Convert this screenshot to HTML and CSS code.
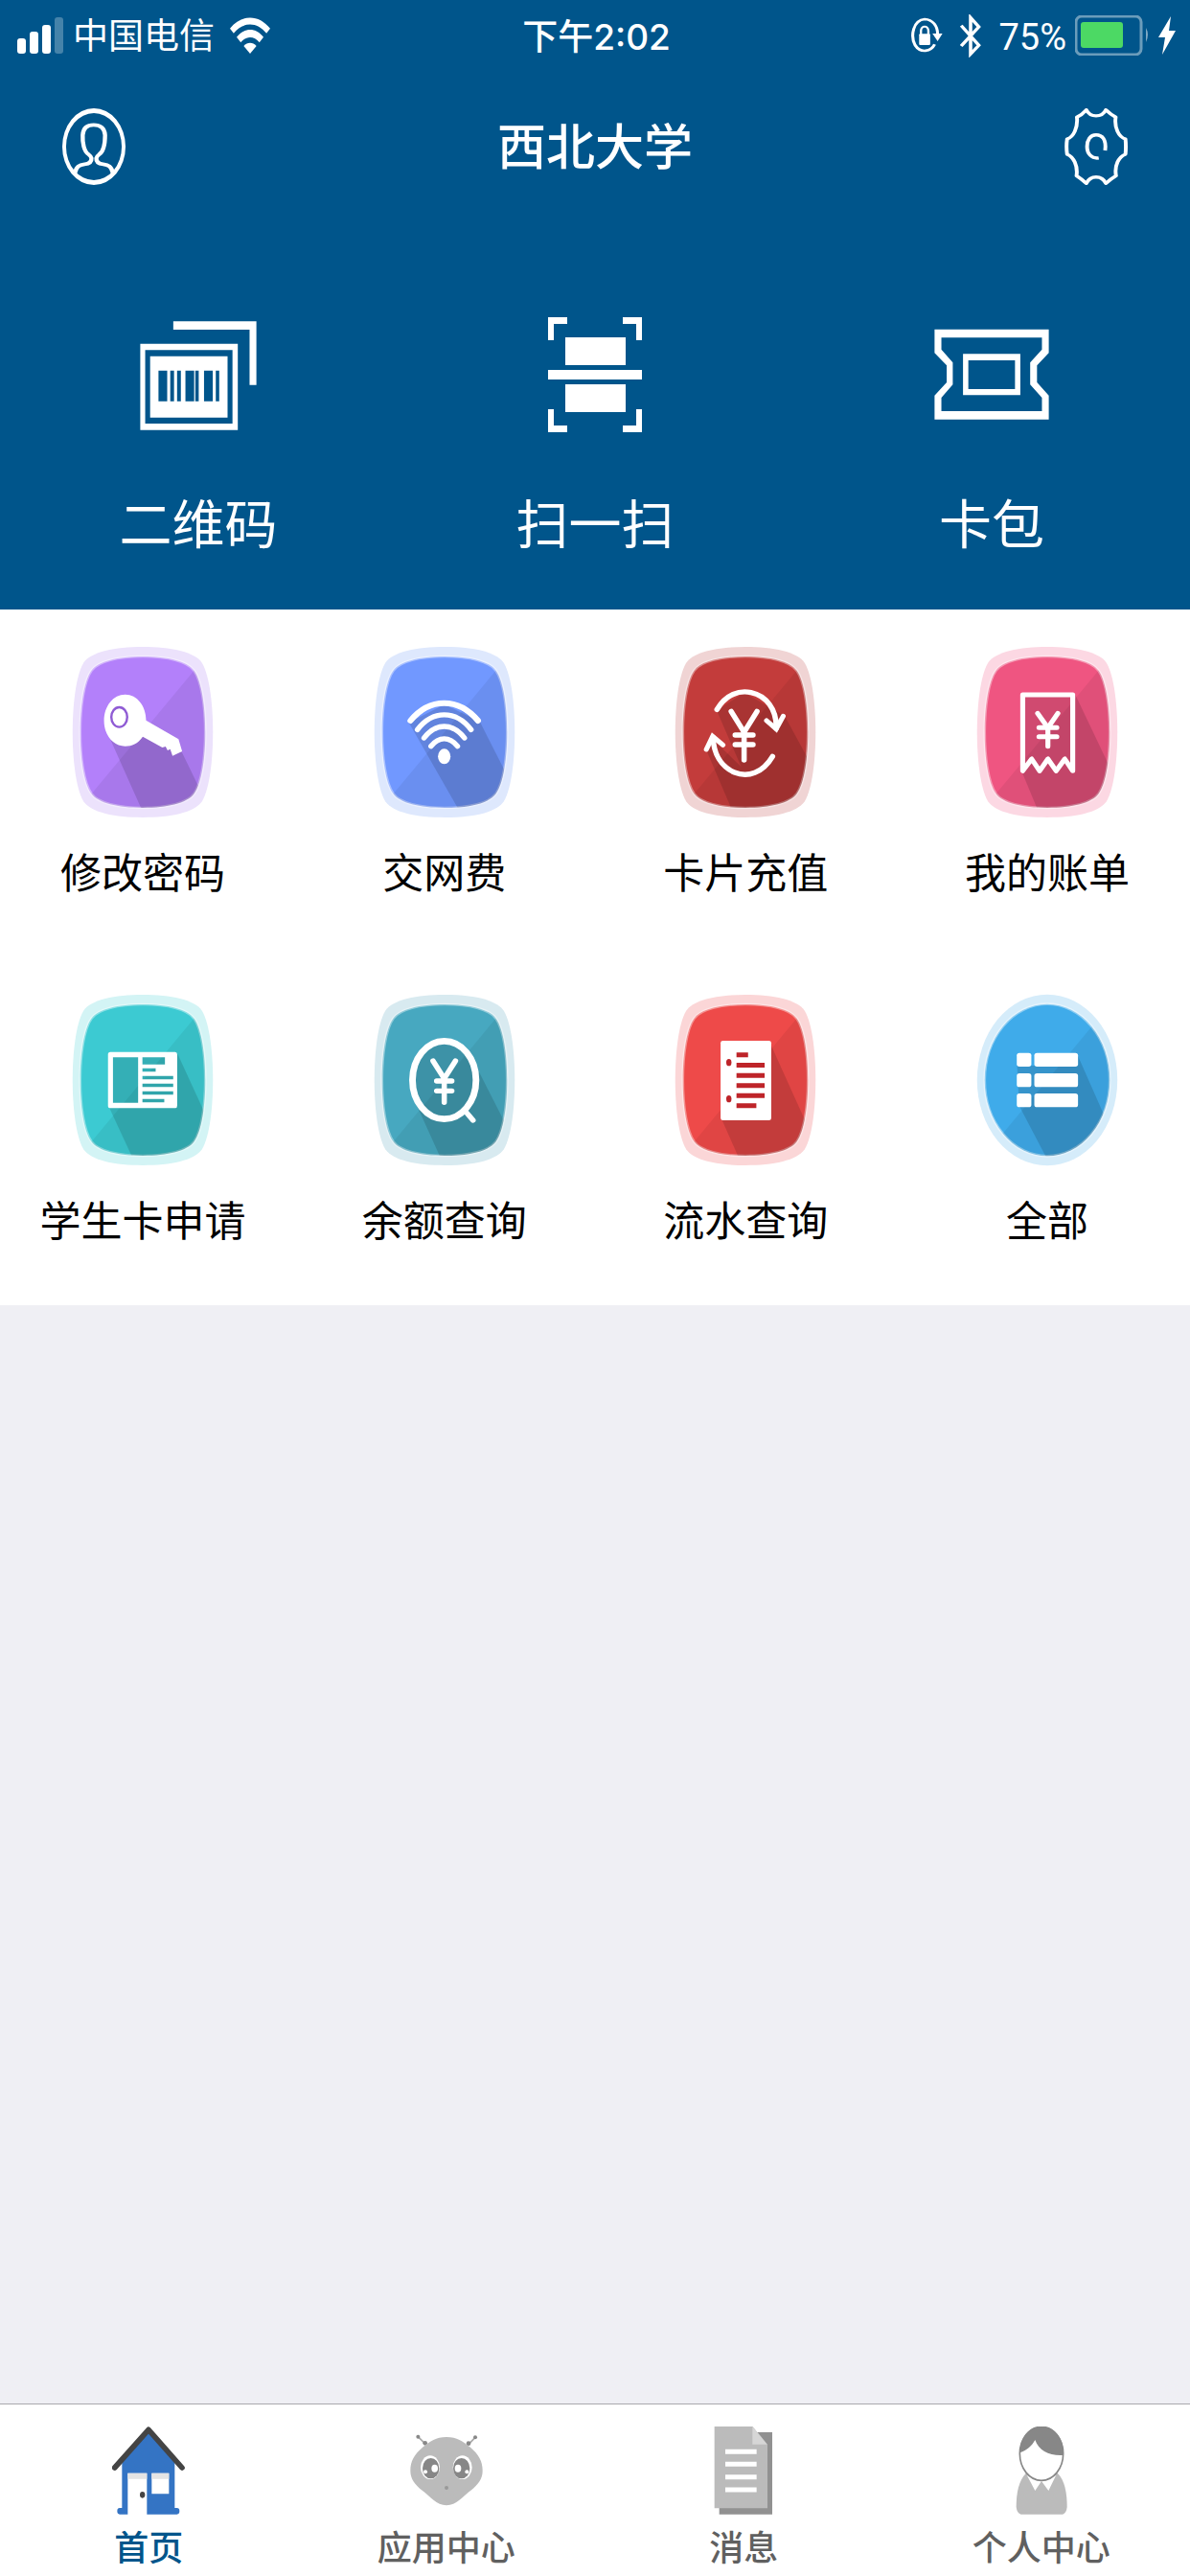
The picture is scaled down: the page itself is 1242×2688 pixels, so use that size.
FILE: index.html
```html
<!DOCTYPE html>
<html lang="zh-CN">
<head>
<meta charset="utf-8">
<meta name="viewport" content="width=device-width, initial-scale=1">
<title>西北大学</title>
<link rel="stylesheet" href="styles.css">
</head>
<body>
<svg class="defs" aria-hidden="true">
  <defs>
    <path id="squircle" d="M0-237C75-237 135-222 155-193C178-160 189-80 189 0S178 160 155 193C135 222 75 237 0 237S-135 222-155 193C-178 160-189 80-189 0S-178-160-155-193C-135-222-75-237 0-237Z"/>
    <path id="halo" d="M0-267C85-267 156-252 179-217C203-175 212-80 212 0S203 175 179 217C156 252 85 267 0 267S-156 252-179 217C-203 175-212 80-212 0S-203-175-179-217C-156-252-85-267 0-267Z"/>
    <clipPath id="clip-square"><use href="#squircle"/></clipPath>
    <clipPath id="clip-round"><ellipse rx="189" ry="238"/></clipPath>
    <g id="tile">
      <use href="#halo" class="tile-halo"/>
      <use href="#squircle" class="tile-face"/>
      <path clip-path="url(#clip-square)" class="tile-fold" d="M174-217L-174 217V270H220V-217Z"/>
    </g>
  </defs>
</svg>

<header class="header">
  <div class="status">
    <div class="status-left">
      <svg width="48" height="38" viewBox="0 0 48 38" fill="#fff" aria-hidden="true">
        <rect y="22" width="9" height="16" rx="3"/><rect x="13" y="15" width="9" height="23" rx="3"/><rect x="26" y="8" width="9" height="30" rx="3"/><rect x="39" width="9" height="38" rx="3" opacity=".27"/>
      </svg>
      <span class="carrier">中国电信</span>
      <svg width="42" height="38" viewBox="605 53 108 113" preserveAspectRatio="none" aria-hidden="true">
        <g fill="#fff"><path d="M605 88C635 43 683 43 713 88L703 103C678 66 640 66 615 103Z"/><path d="M623 115C643 84 675 84 695 115L684 131C670 110 648 110 634 131Z"/><path d="M642 142C652 129 666 129 676 142L659 166Z"/></g>
      </svg>
    </div>
    <time class="clock">下午2:02</time>
    <div class="status-right">
      <svg class="lock" width="34" height="38" viewBox="822 52 88 114" preserveAspectRatio="none" aria-hidden="true">
        <path d="M888 137C878 160 850 166 835 139C822 110 830 61 861 58C883 59 896 80 896 105" fill="none" stroke="#fff" stroke-width="8"/>
        <path d="M882 103H909L896 127Z" fill="#fff"/><rect x="846" y="104" width="30" height="35" rx="3" fill="#fff"/>
        <path d="M851 106V95C851 77 871 77 871 95V106" fill="none" stroke="#fff" stroke-width="6"/>
      </svg>
      <svg class="bluetooth" width="22" height="45" viewBox="953 45 56 135" preserveAspectRatio="none" aria-hidden="true">
        <path d="M956 80L1003 142L981 169V55L1003 84L956 144" fill="none" stroke="#fff" stroke-width="9"/>
      </svg>
      <span class="percent">75%</span>
      <svg class="battery" width="78" height="42" viewBox="0 0 78 42" aria-hidden="true">
        <rect x="1" y="1" width="68" height="40" rx="6" fill="none" stroke="#fff" stroke-opacity=".42" stroke-width="3"/>
        <rect x="6" y="7" width="44" height="27" rx="3" fill="#4cd964"/><path d="M74 13Q78 20 74 28Z" fill="#fff" opacity=".5"/>
      </svg>
      <svg width="18" height="40" viewBox="0 0 18 40" aria-hidden="true"><path d="M13 0L0 22H7L4 40L18 15H11Z" fill="#fff"/></svg>
    </div>
  </div>

  <div class="titlebar">
    <button class="icon-button" type="button" aria-label="个人">
      <svg width="66" height="80" viewBox="163 338 167 240" preserveAspectRatio="none" aria-hidden="true">
        <path fill="#fff" fill-rule="evenodd" d="M163 458A83.500 120 0 0 1 330 458A83.500 120 0 0 1 163 458ZM173 458A73.500 105 0 0 0 320 458A73.500 105 0 0 0 173 458Z"/>
        <path d="M196 542C200 520 208 515 222 513Q241 511 240 494Q239 488 233 483C220 474 216 445 217 422C218 400 229 390 246 390S275 400 276 422C276 445 272 474 260 483Q254 488 253 494Q252 511 271 513C285 515 293 520 297 542" fill="none" stroke="#fff" stroke-width="11"/>
      </svg>
    </button>
    <h1 class="title">西北大学</h1>
    <button class="icon-button" type="button" aria-label="设置">
      <svg width="66" height="80" viewBox="1238 337 168 242" preserveAspectRatio="none" aria-hidden="true">
        <g fill="none" stroke="#fff" stroke-width="10" stroke-linejoin="round"><path d="M1296 342Q1304 361 1322 361Q1340 361 1348 342Q1362 358 1374 365C1370 398 1382 428 1400 434Q1402 458 1400 482C1382 490 1370 518 1375 550Q1361 560 1348 574Q1340 554 1322 554Q1304 554 1296 574Q1283 560 1270 550C1274 518 1262 490 1245 482Q1242 458 1245 434C1262 428 1274 398 1271 365Q1284 358 1296 342Z"/><path d="M1346 470C1350 435 1338 421 1322 421C1306 421 1298 438 1298 458C1298 480 1310 497 1329 494"/></g>
      </svg>
    </button>
  </div>

  <nav class="actions" aria-label="快捷操作">
    <a class="action" href="#qrcode">
      <svg width="122" height="120" viewBox="119 93 308 360" preserveAspectRatio="none" fill="#fff" aria-hidden="true">
        <path d="M207 106H426V305H408V132H207Z"/>
        <path fill-rule="evenodd" d="M120 176H377V446H120ZM133 196V426H363V196Z"/>
        <path fill-rule="evenodd" d="M146 215H350V407H146ZM168 260V356H191V260ZM199 260V356H209V260ZM217 260V356H227V260ZM239 260V356H262V260ZM265 260V356H274V260ZM288 260V356H311V260ZM319 260V356H328V260Z"/>
      </svg>
      <span>二维码</span>
    </a>
    <a class="action" href="#scan">
      <svg width="98" height="120" viewBox="0 0 98 120" fill="#fff" aria-hidden="true">
        <path d="M0 0H20V7H6V24H0ZM98 0H78V7H92V24H98ZM0 120H20V113H6V96H0ZM98 120H78V113H92V96H98Z"/><path d="M18 21H81V50H18ZM0 55H98V65H0ZM18 70H81V99H18Z"/>
      </svg>
      <span>扫一扫</span>
    </a>
    <a class="action" href="#cards">
      <svg width="120" height="120" viewBox="894 93 303 360" preserveAspectRatio="none" fill="#fff" aria-hidden="true">
        <path fill-rule="evenodd" d="M895 131H1196V205L1165 244V297L1196 338V413H895V338L927 297V244L895 205ZM913 157V194L943 235V304L913 345V387H1178V345L1147 304V235L1178 194V157Z"/>
        <path fill-rule="evenodd" d="M970 208H1121V337H970ZM984 228V318H1107V228Z"/>
      </svg>
      <span>卡包</span>
    </a>
  </nav>
</header>

<main class="content">
  <section class="services" aria-label="服务">
    <a class="service purple" href="#password">
      <svg class="tile" viewBox="-220 -276 440 552" preserveAspectRatio="none" aria-hidden="true">
        <use href="#tile"/>
        <g clip-path="url(#clip-square)"><path class="shade" transform="translate(-345 -312)" d="M245 330L340 550H550V560L463 374L340 290Z"/></g>
        <g transform="translate(-345 -312)">
          <path fill="#fff" d="M292 194C328 194 355 230 355 275L453 334L464 372L435 386L428 365L420 369L414 357L404 360L345 326C330 348 312 356 292 356C256 356 228 322 228 276S256 194 292 194Z"/>
          <ellipse cx="274" cy="265" rx="24" ry="31" fill="#fff" stroke="#8f5bd4" stroke-width="7"/>
        </g>
      </svg>
      <span>修改密码</span>
    </a>
    <a class="service blue" href="#network">
      <svg class="tile" viewBox="-220 -276 440 552" preserveAspectRatio="none" aria-hidden="true">
        <use href="#tile"/>
        <g clip-path="url(#clip-square)"><path class="shade" transform="translate(-1260 -312)" d="M1152 282L1300 550H1460V470L1367 280L1260 225Z"/></g>
        <g transform="translate(-1260 -312)">
          <g fill="none" stroke="#fff" stroke-width="16" stroke-linecap="round"><path stroke-width="18" d="M1157 276C1215 203 1302 203 1361 276"/><path d="M1178 304C1224 242 1294 242 1340 304"/><path d="M1198 330C1234 282 1284 282 1320 330"/><path d="M1219 356C1243 325 1275 325 1299 356"/></g>
          <ellipse cx="1259" cy="388" rx="19" ry="24" fill="#fff"/>
        </g>
      </svg>
      <span>交网费</span>
    </a>
    <a class="service crimson" href="#topup">
      <svg class="tile" viewBox="-220 -276 440 552" preserveAspectRatio="none" aria-hidden="true">
        <use href="#tile"/>
        <g clip-path="url(#clip-square)"><path class="shade" transform="translate(-343 -312)" d="M225 368L300 550H540V410L462 262L340 188L256 244L330 420L245 335Z"/></g>
        <g transform="translate(-343 -312)" fill="none" stroke="#fff" stroke-linecap="round">
          <path stroke-width="16" d="M257 241C285 193 325 180 360 188C405 198 438 240 436 300M425 388C395 440 350 455 310 438C270 420 247 380 245 328"/>
          <path stroke-width="15" d="M407 276L436 302L457 262M225 366L244 325L275 352"/>
          <path stroke-width="16" d="M300 247L339 312L378 247M339 312V399M312 321H366M312 351H366"/>
        </g>
      </svg>
      <span>卡片充值</span>
    </a>
    <a class="service pink" href="#bills">
      <svg class="tile" viewBox="-220 -276 440 552" preserveAspectRatio="none" aria-hidden="true">
        <use href="#tile"/>
        <g clip-path="url(#clip-square)"><path class="shade" transform="translate(-1257 -312)" d="M1182 195H1342L1450 430V560H1230L1182 440Z"/></g>
        <g transform="translate(-1257 -312)" fill="none" stroke="#fff" stroke-linecap="round" stroke-linejoin="round">
          <path stroke-width="15" d="M1183 195H1334V433L1310 396L1284 433L1259 396L1234 433L1210 396L1183 433Z"/>
          <path stroke-width="15" d="M1228 253L1259 298L1289 253M1259 298V356M1232 298H1286M1232 326H1286"/>
        </g>
      </svg>
      <span>我的账单</span>
    </a>
    <a class="service teal" href="#student-card">
      <svg class="tile" viewBox="-220 -276 440 552" preserveAspectRatio="none" aria-hidden="true">
        <use href="#tile"/>
        <g clip-path="url(#clip-square)"><path class="shade" transform="translate(-346 -320)" d="M242 240H452L545 450V570H318L242 400Z"/></g>
        <path transform="translate(-346 -320)" fill="#fff" fill-rule="evenodd" d="M248 232H444Q450 232 450 240V400Q450 408 444 408H248Q241 408 241 400V240Q241 232 248 232ZM256 249V391H332V249ZM345 249V271H413V249ZM345 283V294H385V283ZM345 307V318H438V307ZM345 331V342H438V331ZM345 355V366H438V355ZM345 379V390H411V379Z"/>
      </svg>
      <span>学生卡申请</span>
    </a>
    <a class="service cyan" href="#balance">
      <svg class="tile" viewBox="-220 -276 440 552" preserveAspectRatio="none" aria-hidden="true">
        <use href="#tile"/>
        <g clip-path="url(#clip-square)"><path class="shade" transform="translate(-1260 -320)" d="M1259 200C1310 200 1350 245 1362 290L1460 490V580H1255L1185 420C1150 350 1165 210 1259 200Z"/></g>
        <g transform="translate(-1260 -320)" fill="none" stroke="#fff" stroke-linecap="round">
          <ellipse cx="1259" cy="320" rx="96" ry="122" stroke-width="20"/><path stroke-width="16" d="M1323 418L1346 446"/>
          <path stroke-width="16" d="M1225 260L1259 315L1293 260M1259 315V390M1236 323H1282M1236 354H1282"/>
        </g>
      </svg>
      <span>余额查询</span>
    </a>
    <a class="service red" href="#history">
      <svg class="tile" viewBox="-220 -276 440 552" preserveAspectRatio="none" aria-hidden="true">
        <use href="#tile"/>
        <g clip-path="url(#clip-square)"><path class="shade" transform="translate(-343 -320)" d="M418 205L540 485V580H330L270 440Z"/></g>
        <g transform="translate(-343 -320)">
          <rect x="268" y="197" width="153" height="249" rx="7" fill="#fff"/>
          <path fill="#be2429" d="M316 234H351V249H316ZM316 266H401V281H316ZM316 298H401V313H316ZM316 330H401V345H316ZM316 361H401V376H316ZM316 393H376V408H316Z"/><ellipse cx="293" cy="265" rx="8" ry="11" fill="#be2429"/><ellipse cx="293" cy="379" rx="8" ry="11" fill="#be2429"/>
        </g>
      </svg>
      <span>流水查询</span>
    </a>
    <a class="service sky" href="#all">
      <svg class="tile" viewBox="-220 -276 440 552" preserveAspectRatio="none" aria-hidden="true">
        <ellipse class="tile-halo" rx="212" ry="268"/><ellipse class="tile-face" rx="189" ry="238"/>
        <g clip-path="url(#clip-round)"><path class="tile-fold" d="M174-217L-174 217V270H220V-217Z"/><path class="shade" transform="translate(-1257 -320)" d="M1166 275H1350V245L1450 480V580H1263L1172 400Z"/></g>
        <g transform="translate(-1257 -320)" fill="#fff"><rect x="1165" y="235" width="44" height="43" rx="8"/><rect x="1218" y="235" width="132" height="43" rx="8"/><rect x="1165" y="299" width="44" height="43" rx="8"/><rect x="1218" y="299" width="132" height="43" rx="8"/><rect x="1165" y="362" width="44" height="43" rx="8"/><rect x="1218" y="362" width="132" height="43" rx="8"/></g>
      </svg>
      <span>全部</span>
    </a>
  </section>
</main>

<nav class="tabbar" aria-label="主导航">
  <a class="tab active" href="#home" aria-current="page">
    <svg width="76" height="92" viewBox="173 126 228 276" aria-hidden="true">
      <path fill="#3474c4" d="M287 142L369 236V381H376Q384 381 384 391T376 401H197Q189 401 189 391T197 381H204V236Z"/>
      <path fill="#fff" d="M222 272H282V402H222ZM297 272H351V337H297Z"/><path fill="#e4e4e4" d="M222 272H282V290H222ZM297 272H351V290H297Z"/>
      <path d="M181 255L287 136L392 255" fill="none" stroke="#444" stroke-width="17" stroke-linejoin="round" stroke-linecap="round"/><ellipse cx="268" cy="340" rx="8" ry="10" fill="#444"/>
    </svg>
    <span>首页</span>
  </a>
  <a class="tab" href="#apps">
    <svg width="76" height="92" viewBox="1103 126 228 276" aria-hidden="true">
      <path d="M1128 158L1152 182M1307 160L1284 184" stroke="#aaa" stroke-width="5"/><g fill="#888"><circle cx="1128" cy="158" r="6"/><circle cx="1150" cy="178" r="7"/><circle cx="1307" cy="160" r="6"/><circle cx="1286" cy="179" r="7"/></g>
      <path fill="#bbb" d="M1217 159C1250 159 1268 172 1290 190C1318 213 1330 236 1330 265C1330 292 1315 308 1295 325C1268 345 1248 373 1217 373S1166 345 1139 325C1119 308 1104 292 1104 265C1104 236 1116 213 1144 190C1166 172 1184 159 1217 159Z"/>
      <g fill="#fff"><ellipse cx="1166" cy="254" rx="30" ry="37"/><ellipse cx="1267" cy="254" rx="30" ry="37"/></g>
      <g fill="#878787"><ellipse cx="1168" cy="257" rx="26" ry="32"/><ellipse cx="1264" cy="257" rx="26" ry="32"/></g>
      <g fill="#fff"><ellipse cx="1180" cy="257" rx="10" ry="12"/><ellipse cx="1253" cy="257" rx="10" ry="12"/><circle cx="1151" cy="268" r="6"/><circle cx="1281" cy="268" r="6"/></g><circle cx="1217" cy="318" r="6" fill="#999"/>
    </svg>
    <span>应用中心</span>
  </a>
  <a class="tab" href="#messages">
    <svg width="76" height="92" viewBox="176 126 228 276" aria-hidden="true">
      <path fill="#919191" d="M214 144H380V401H214Z"/><path fill="#bbb" d="M199 126H319L365 182V382H199Z"/>
      <path fill="#fff" d="M319 126L334 144H382V126Z"/><path fill="#d6d6d6" d="M318 126L364 182H318Z"/>
      <path d="M233 205H331M233 244H331M233 284H331M233 324H331" stroke="#fff" stroke-width="15"/>
    </svg>
    <span>消息</span>
  </a>
  <a class="tab" href="#profile">
    <svg width="76" height="92" viewBox="1105 126 228 276" aria-hidden="true">
      <path fill="#bbb" d="M1170 273C1148 295 1140 335 1140 378Q1142 398 1155 401H1285Q1297 398 1299 378C1299 335 1292 295 1270 273Z"/>
      <path fill="#fff" d="M1174 280L1199 327L1219 297L1241 327L1264 280Z"/>
      <ellipse cx="1219" cy="211" rx="68" ry="84" fill="#fff" stroke="#878787" stroke-width="5"/>
      <path fill="#878787" d="M1151 208C1152 160 1180 127 1219 127S1290 160 1288 216C1245 219 1211 203 1199 168C1188 188 1175 199 1151 208Z"/>
    </svg>
    <span>个人中心</span>
  </a>
</nav>
</body>
</html>
```

FILE: styles.css
```css
* {
  box-sizing: border-box;
}

body {
  margin: 0;
  min-height: 100vh;
  display: flex;
  flex-direction: column;
  background: #efeff4;
  color: #000;
  font-family: Roboto, "Noto Sans CJK SC", sans-serif;
}

a {
  color: inherit;
  text-decoration: none;
}

svg {
  display: block;
  flex: none;
}

.defs {
  position: absolute;
  width: 0;
  height: 0;
}

/* Header */
.header {
  background: #00558b;
  color: #fff;
}

.status {
  display: grid;
  grid-template-columns: 1fr auto 1fr;
  align-items: center;
  height: 74px;
  padding: 0 15px 0 18px;
  font-size: 37px;
  line-height: 48px;
}

.status-left,
.status-right {
  display: flex;
  align-items: center;
}

.status-left {
  gap: 10px;
}

.carrier,
.clock,
.percent {
  padding-top: 3px;
}

.carrier {
  margin-right: 6px;
}

.status-right {
  justify-content: flex-end;
}

.clock {
  font-family: Inter, "Noto Sans CJK SC", sans-serif;
  font-weight: 500;
}

.percent {
  font-size: 38px;
}

.lock,
.bluetooth {
  margin-right: 18px;
}

.battery {
  margin: 0 9px;
}

.titlebar {
  display: flex;
  align-items: center;
  justify-content: space-between;
  height: 158px;
  padding: 0 65px;
}

.icon-button {
  padding: 0;
  border: 0;
  background: none;
  cursor: pointer;
}

.title {
  margin: 0;
  padding-top: 4px;
  font-size: 51px;
  font-weight: 500;
  line-height: 64px;
}

.actions {
  display: grid;
  grid-template-columns: repeat(3, 1fr);
  padding: 99px 0 55px;
}

.action {
  display: flex;
  flex-direction: column;
  align-items: center;
  gap: 64px;
  font-size: 55px;
  line-height: 66px;
}

/* Services */
.content {
  flex: 1;
}

.services {
  display: grid;
  grid-template-columns: repeat(4, 220px);
  justify-content: space-between;
  padding: 0 39px;
  background: #fff;
}

.service {
  display: flex;
  flex-direction: column;
  align-items: center;
  gap: 26px;
  padding: 36px 0 57px;
  font-size: 43px;
  line-height: 60px;
  white-space: nowrap;
}

.tile {
  width: 152px;
  height: 184px;
}

.tile-halo {
  fill: var(--halo);
}

.tile-face {
  fill: var(--face);
  stroke: #fff;
  stroke-opacity: 0.4;
  stroke-width: 8px;
}

.tile-fold {
  fill: #000;
  opacity: 0.06;
}

.shade {
  fill: #000;
  opacity: 0.13;
}

.purple { --face: #b380fa; --halo: #ece2fc; }
.blue { --face: #7198ff; --halo: #dee8fd; }
.crimson { --face: #c33c3b; --halo: #f0d4d4; }
.pink { --face: #ef5581; --halo: #fcd8e3; }
.teal { --face: #3ccad2; --halo: #d3f4f5; }
.cyan { --face: #47a8c0; --halo: #d8eaf0; }
.red { --face: #ee4a49; --halo: #fbd6d7; }
.sky { --face: #3fabea; --halo: #d5ecfa; }

/* Tab bar */
.tabbar {
  display: grid;
  grid-template-columns: repeat(4, 1fr);
  padding: 23px 0 4px;
  border-top: 1px solid #a9a9ad;
  background: #fff;
  color: #606060;
}

.tab {
  display: flex;
  flex-direction: column;
  align-items: center;
  gap: 12px;
  font-size: 36px;
  font-weight: 500;
  line-height: 48px;
}

.tab.active {
  color: #00558b;
}
```
